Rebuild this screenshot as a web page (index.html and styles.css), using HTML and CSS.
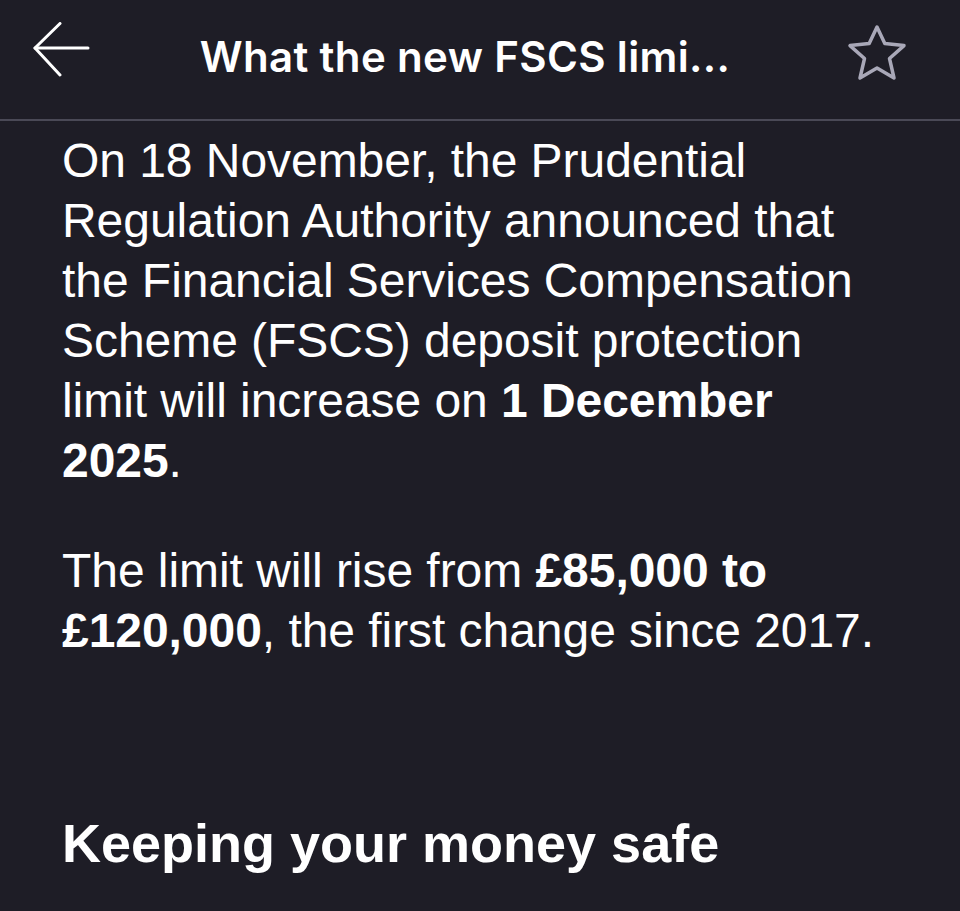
FILE: index.html
```html
<!DOCTYPE html>
<html lang="en">
<head>
<meta charset="utf-8">
<title>FSCS</title>
<link rel="stylesheet" href="styles.css">
</head>
<body>
<header class="topbar">
  <button class="icon-btn back" aria-label="Back">
    <svg width="58" height="56" viewBox="0 0 58 56" fill="none" stroke="#ffffff" stroke-width="3" stroke-linecap="round" stroke-linejoin="round">
      <path d="M56 26 H3"/>
      <path d="M28 1.5 L3 26 L28 53"/>
    </svg>
  </button>
  <h1 class="title">What the new FSCS limi...</h1>
  <button class="icon-btn star" aria-label="Favourite">
    <svg width="66" height="58" viewBox="0 0 66 58" fill="none" stroke="#a9a8b8" stroke-width="3.5" stroke-linejoin="round">
      <path d="M33 3 L40.8 19.6 L60 21.6 L45.5 34.5 L50 54 L33 44 L16 54 L20.5 34.5 L6 21.6 L25.2 19.6 Z"/>
    </svg>
  </button>
</header>
<main class="article">
  <p class="para">On 18 November, the Prudential Regulation Authority announced that the Financial Services Compensation Scheme (FSCS) deposit protection limit will increase on <strong>1 December 2025</strong>.</p>
  <p class="para">The limit will rise from <strong>£85,000 to £120,000</strong>, the first change since 2017.</p>
  <h2 class="heading">Keeping your money safe</h2>
</main>
</body>
</html>
```

FILE: styles.css
```css
html, body {
  margin: 0;
  padding: 0;
  background: #1e1d26;
  color: #ffffff;
  font-family: "Liberation Sans", Arial, sans-serif;
}
body {
  width: 960px;
  height: 911px;
  overflow: hidden;
}
.topbar {
  height: 119px;
  border-bottom: 2px solid #4a4956;
  display: flex;
  align-items: flex-start;
  justify-content: space-between;
  padding: 0 50px 0 32px;
  box-sizing: content-box;
}
.icon-btn {
  background: none;
  border: 0;
  padding: 0;
  margin: 0;
  display: flex;
}
.back {
  margin-top: 22px;
}
.star {
  margin-top: 24px;
}
.title {
  margin: 31px 4px 0 0;
  font-family: Inter, "Liberation Sans", sans-serif;
  font-weight: 600;
  font-size: 42px;
  line-height: 52px;
  letter-spacing: 0.35px;
  color: #ffffff;
  white-space: nowrap;
}
.article {
  padding: 10px 0 0 62px;
  width: 825px;
}
.para {
  margin: 0 0 50px 0;
  font-size: 48px;
  line-height: 60px;
  letter-spacing: -0.05px;
}
.para strong {
  font-weight: 700;
}
.heading {
  margin: 149px 0 0 0;
  font-size: 54px;
  line-height: 66px;
  font-weight: 700;
}
```
